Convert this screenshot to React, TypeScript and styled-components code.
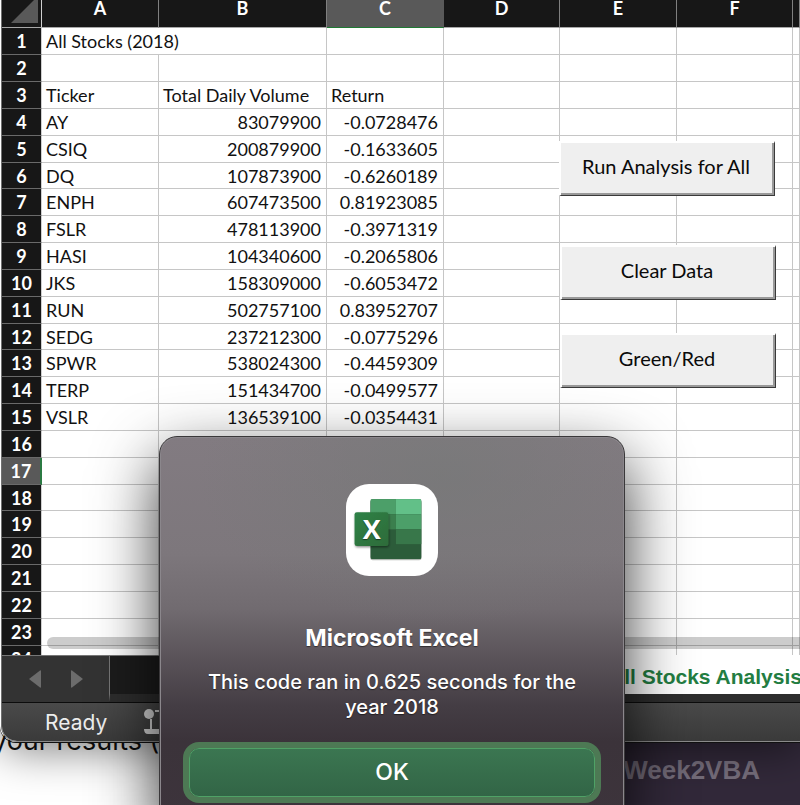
import React from 'react';
import styled, { createGlobalStyle, css } from 'styled-components';

const GlobalStyle = createGlobalStyle`
  *, *::before, *::after { box-sizing: border-box; }
  body { margin: 0; background: #fff; }
  button { font: inherit; cursor: pointer; }
`;

const sheetFont = "Lato, 'Open Sans', sans-serif";
const systemFont = "Inter, 'Liberation Sans', sans-serif";

const Desktop = styled.div`
  position: relative;
  display: flex;
  flex-direction: column;
  min-height: 100vh;
  overflow: hidden;
  font-family: ${systemFont};
`;

const ExcelWindow = styled.main`
  position: relative;
  z-index: 1;
  margin-left: 1px;
  border-left: 1px solid #707070;
  border-bottom: 1px solid #8a8a8a;
  border-bottom-left-radius: 16px;
  overflow: hidden;
  background: #fff;
`;

const WindowShadow = styled.div`
  position: relative;
  z-index: 1;
  border-bottom-left-radius: 16px;
  box-shadow: 0 1px 0 #111, 0 8px 44px rgba(0, 0, 0, 0.5);
`;

const SheetArea = styled.section`
  position: relative;
  height: 655px;
  overflow: hidden;
`;

const Grid = styled.table`
  width: 100%;
  min-width: 798px;
  table-layout: fixed;
  border-collapse: separate;
  border-spacing: 0;
  font-family: ${sheetFont};
  font-size: 18px;
  color: #111;
`;

const Col = styled.col<{ $w?: number }>`
  ${(p) => p.$w && css`width: ${p.$w}px;`}
`;

const ColumnHead = styled.th<{ $selected?: boolean }>`
  height: 28px;
  padding: 0;
  vertical-align: top;
  line-height: 16px;
  font-weight: 700;
  color: #fff;
  background: ${(p) => (p.$selected ? '#595959' : '#171717')};
  border-right: 1px solid ${(p) => (p.$selected ? '#595959' : '#808080')};
  border-bottom: 1px solid ${(p) => (p.$selected ? '#1f7a33' : '#a8a8a8')};
`;

const Corner = styled.td`
  height: 28px;
  padding: 0;
  vertical-align: top;
  background: #171717;
  border-right: 1px solid #cfcfcf;
  border-bottom: 1px solid #a8a8a8;
`;

const CornerMark = styled.svg`
  display: block;
  margin-left: 8px;
`;

const Row = styled.tr`
  height: 27px;
  &:nth-child(6n) { height: 26px; }
`;

const RowHead = styled.th<{ $selected?: boolean }>`
  padding: 0;
  line-height: 24px;
  text-align: center;
  font-weight: 700;
  color: #fff;
  background: ${(p) => (p.$selected ? '#595959' : '#171717')};
  border-right: ${(p) => (p.$selected ? '2px solid #2b7a43' : '1px solid #cfcfcf')};
  border-bottom: 1px solid #6a6a6a;
`;

const Cell = styled.td<{ $numeric?: boolean }>`
  padding: 0 5px 0 4px;
  line-height: 24px;
  white-space: nowrap;
  text-align: ${(p) => (p.$numeric ? 'right' : 'left')};
  border-right: 1px solid #c6c6c6;
  border-bottom: 1px solid #c6c6c6;
`;

const MacroButton = styled.button<{ $top: number; $left: number }>`
  position: absolute;
  top: ${(p) => p.$top}px;
  left: ${(p) => p.$left}px;
  width: 216px;
  height: 55px;
  padding: 0 3px 6px 0;
  font-family: ${sheetFont};
  font-size: 20px;
  line-height: 24px;
  color: #0a0a0a;
  background: #efefef;
  border: solid;
  border-width: 2px 1px 1px 2px;
  border-color: #fff #3a3a3a #3a3a3a #fff;
  box-shadow: inset -2px -2px 0 #999;
`;

const ScrollThumb = styled.div`
  position: absolute;
  left: 45px;
  right: -12px;
  bottom: 6px;
  height: 12px;
  border-radius: 6px;
  background: rgba(0, 0, 0, 0.2);
`;

const TabBar = styled.nav`
  display: flex;
  height: 47px;
  background: #1c1c1c;
`;

const TabArrows = styled.div`
  display: flex;
  align-items: center;
  gap: 28px;
  width: 107px;
  padding-left: 26px;
  border-top: 1px solid #777;
  background: #333;
`;

const ArrowButton = styled.button`
  display: flex;
  padding: 0;
  border: 0;
  background: none;
`;

const TabStrip = styled.div`
  display: flex;
  flex: 1;
  justify-content: flex-end;
  min-width: 0;
  border-bottom: 8px solid #2d2d2d;
  border-left: 1px solid #777;
  background: #1c1c1c;
  box-shadow: inset 0 1px 0 #777;
  overflow: hidden;
`;

const SheetTab = styled.button`
  flex: 0 0 206px;
  padding: 5px 0 0 15px;
  border: 0;
  font-family: 'Liberation Sans', sans-serif;
  font-size: 21px;
  font-weight: 700;
  text-align: left;
  white-space: nowrap;
  overflow: hidden;
  color: #237d42;
  background: #fff;
`;

const StatusBar = styled.footer`
  display: flex;
  align-items: center;
  gap: 36px;
  height: 39px;
  padding-left: 43px;
  border-top: 1px solid #0c0c0c;
  font-size: 21px;
  color: #ededed;
  background: linear-gradient(#4a4a4a, #3a3a3a);
`;

const Behind = styled.div`
  display: flex;
  flex: 1;
  min-height: 83px;
  margin-top: -20px;
`;

const DocumentPage = styled.div`
  flex: 0 0 50%;
  font-size: 27px;
  line-height: 30px;
  padding-top: 4px;
  white-space: nowrap;
  color: #111;
  background: #fff;
  text-indent: -8px;
`;

const SidePanel = styled.div`
  display: flex;
  align-items: flex-end;
  justify-content: flex-end;
  flex: 1;
  padding: 0 40px 20px 0;
  font-family: 'Liberation Sans', sans-serif;
  font-size: 26px;
  font-weight: 700;
  line-height: 30px;
  color: #776f7d;
  background: #32293a;
`;

const Dialog = styled.section`
  position: absolute;
  z-index: 2;
  top: 436px;
  left: 49%;
  display: flex;
  flex-direction: column;
  align-items: center;
  width: 466px;
  height: 392px;
  padding: 47px 24px 0;
  transform: translateX(-50%);
  border: 1px solid #3a383a;
  border-radius: 18px;
  color: #fff;
  text-align: center;
  text-shadow: 0 1px 1px rgba(0, 0, 0, 0.5);
  background:
    radial-gradient(ellipse 240px 150px at 60% 10%, rgba(116, 120, 118, 0.6), transparent),
    linear-gradient(#827b81 0%, #7d777c 30%, #716b70 44%, #5b545a 56%, #443d44 69%, #3b333a 78%, #3d343c 100%);
  box-shadow: inset 0 0 0 1px #8b878c, 0 24px 64px rgba(0, 0, 0, 0.8);
`;

const DialogTitle = styled.h1`
  margin: 48px 0 0;
  font-size: 23px;
  font-weight: 700;
  line-height: 28px;
`;

const DialogMessage = styled.p`
  width: 380px;
  margin: 18px 0 0;
  font-size: 20px;
  font-weight: 500;
  line-height: 25px;
`;

const OkButton = styled.button`
  align-self: stretch;
  height: 49px;
  margin: 28px 5px 0;
  padding: 0 0 2px;
  border: 1px solid #4fa266;
  border-radius: 10px;
  color: #fff;
  font-size: 23px;
  font-weight: 500;
  background: linear-gradient(#3b7651, #326546);
  box-shadow: 0 0 0 6px #4d7954;
`;

const rows: [string, string, string][] = [
  ['AY', '83079900', '-0.0728476'],
  ['CSIQ', '200879900', '-0.1633605'],
  ['DQ', '107873900', '-0.6260189'],
  ['ENPH', '607473500', '0.81923085'],
  ['FSLR', '478113900', '-0.3971319'],
  ['HASI', '104340600', '-0.2065806'],
  ['JKS', '158309000', '-0.6053472'],
  ['RUN', '502757100', '0.83952707'],
  ['SEDG', '237212300', '-0.0775296'],
  ['SPWR', '538024300', '-0.4459309'],
  ['TERP', '151434700', '-0.0499577'],
  ['VSLR', '136539100', '-0.0354431'],
];

const columns = ['A', 'B', 'C', 'D', 'E', 'F', ''];
const columnWidths = [40, 117, 168, 117, 116, 117, 116];

function contentFor(n: number): string[] {
  if (n === 3) return ['Ticker', 'Total Daily Volume', 'Return'];
  return rows[n - 4] ?? ['', '', ''];
}

function SheetRow({ n }: { n: number }) {
  const content = contentFor(n);
  return (
    <Row>
      <RowHead scope="row" $selected={n === 17}>{n}</RowHead>
      {n === 1 ? (
        <>
          <Cell colSpan={2}>All Stocks (2018)</Cell>
          <Cell />
        </>
      ) : (
        content.map((text, i) => (
          <Cell key={i} $numeric={n > 3 && i > 0}>{text}</Cell>
        ))
      )}
      <Cell /><Cell /><Cell /><Cell />
    </Row>
  );
}

function ExcelLogo() {
  return (
    <svg width="92" height="92" viewBox="0 0 280 280" role="img" aria-label="Excel">
      <defs>
        <linearGradient id="badge" x1="0" y1="0" x2="1" y2="1">
          <stop offset="0" stopColor="#2f8247" />
          <stop offset="1" stopColor="#2f6b39" />
        </linearGradient>
        <clipPath id="book"><rect x="74" y="46" width="156" height="183" rx="7" /></clipPath>
        <filter id="soft" x="-20%" y="-20%" width="150%" height="150%">
          <feDropShadow dx="2" dy="4" stdDeviation="4" floodOpacity="0.45" />
        </filter>
      </defs>
      <rect width="280" height="280" rx="70" fill="#fff" />
      <rect x="74" y="50" width="156" height="182" rx="7" fill="#b9bdb9" />
      <g clipPath="url(#book)">
        <rect x="74" y="46" width="156" height="183" fill="#2c5c3a" />
        <rect x="74" y="46" width="78" height="46" fill="#4c9f69" />
        <rect x="152" y="46" width="78" height="46" fill="#62c088" />
        <rect x="74" y="92" width="78" height="46" fill="#3b7f4e" />
        <rect x="152" y="92" width="78" height="46" fill="#4c9f69" />
        <rect x="152" y="138" width="78" height="45" fill="#38774a" />
      </g>
      <rect x="26" y="86" width="103" height="103" rx="7" fill="url(#badge)" filter="url(#soft)" />
      <text x="78" y="167" textAnchor="middle" fontFamily="'Open Sans', sans-serif" fontWeight="700" fontSize="82" fill="#fff">X</text>
    </svg>
  );
}

export default function App() {
  return (
    <Desktop>
      <GlobalStyle />
      <WindowShadow>
        <ExcelWindow>
          <SheetArea>
            <Grid>
              <colgroup>
                {columnWidths.map((w, i) => <Col key={i} $w={w} />)}
                <Col />
              </colgroup>
              <thead>
                <tr>
                  <Corner>
                    <CornerMark width="28" height="24" viewBox="0 0 28 24" aria-hidden="true">
                      <path d="M1 23 L24 0 H28 V23 Z" fill="#595959" />
                    </CornerMark>
                  </Corner>
                  {columns.map((c, i) => (
                    <ColumnHead key={i} scope="col" $selected={c === 'C'}>{c}</ColumnHead>
                  ))}
                </tr>
              </thead>
              <tbody>
                {Array.from({ length: 24 }, (_, i) => <SheetRow key={i} n={i + 1} />)}
              </tbody>
            </Grid>
            <MacroButton type="button" $top={141} $left={557}>Run Analysis for All</MacroButton>
            <MacroButton type="button" $top={245} $left={558}>Clear Data</MacroButton>
            <MacroButton type="button" $top={333} $left={558}>Green/Red</MacroButton>
            <ScrollThumb />
          </SheetArea>
          <TabBar aria-label="Sheets">
            <TabArrows>
              <ArrowButton type="button" aria-label="Previous sheet">
                <svg width="14" height="20" viewBox="0 0 14 20">
                  <path d="M1 10 L12 1.5 Q13 1 13 2 V18 Q13 19 12 18.5 Z" fill="#6c6c6c" />
                </svg>
              </ArrowButton>
              <ArrowButton type="button" aria-label="Next sheet">
                <svg width="14" height="20" viewBox="0 0 14 20">
                  <path d="M13 10 L2 1.5 Q1 1 1 2 V18 Q1 19 2 18.5 Z" fill="#6c6c6c" />
                </svg>
              </ArrowButton>
            </TabArrows>
            <TabStrip>
              <SheetTab type="button">All Stocks Analysis</SheetTab>
            </TabStrip>
          </TabBar>
          <StatusBar>
            <span>Ready</span>
            <svg width="30" height="28" viewBox="0 0 30 28" aria-hidden="true">
              <circle cx="6" cy="6" r="5" fill="#d6d6d6" />
              <path d="M12 3 H28 M8 11 V21" stroke="#d6d6d6" strokeWidth="2" />
              <path d="M1 21 H28 V26 H5 Q1 26 1 21 Z" fill="#d6d6d6" />
            </svg>
          </StatusBar>
        </ExcelWindow>
      </WindowShadow>
      <Behind>
        <DocumentPage>your results (</DocumentPage>
        <SidePanel>Week2VBA</SidePanel>
      </Behind>
      <Dialog role="alertdialog" aria-labelledby="alert-title" aria-describedby="alert-text">
        <ExcelLogo />
        <DialogTitle id="alert-title">Microsoft Excel</DialogTitle>
        <DialogMessage id="alert-text">This code ran in 0.625 seconds for the year 2018</DialogMessage>
        <OkButton type="button">OK</OkButton>
      </Dialog>
    </Desktop>
  );
}
